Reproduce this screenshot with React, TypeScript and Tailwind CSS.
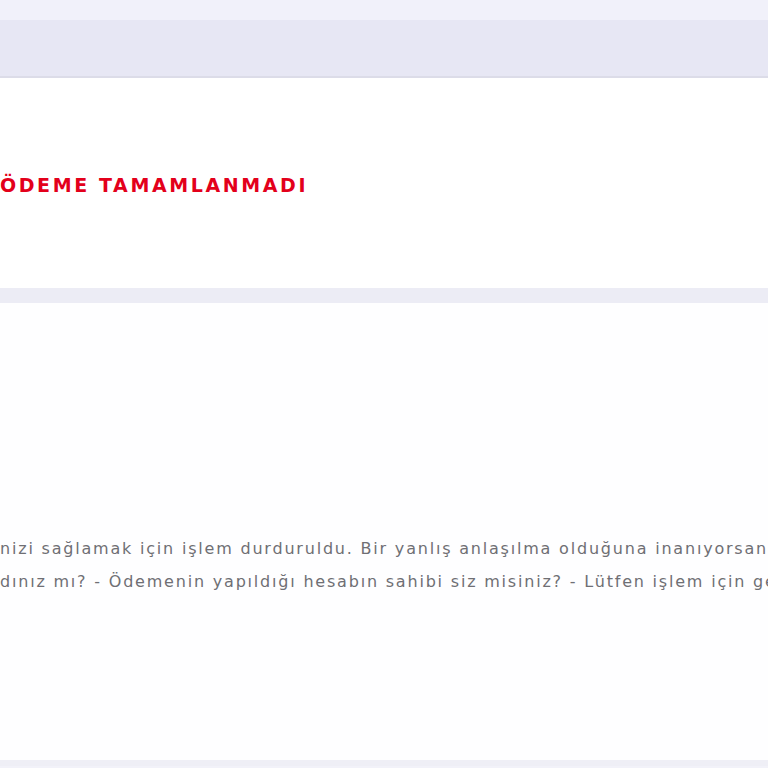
export default function App() {
  return (
    <div className="w-[768px] h-[768px] overflow-hidden bg-[#f2f2f9] flex flex-col" style={{ fontFamily: '"DejaVu Sans", "Noto Sans", sans-serif' }}>
      <div className="h-[20px] shrink-0 bg-[#f1f1fa]" />
      <div className="h-[58px] shrink-0 bg-[#e7e7f4] border-b-2 border-[#dcdce8]" />
      <section className="h-[210px] shrink-0 bg-white flex items-center">
        <h1 className="text-[19px] font-bold text-[#e3001b] tracking-[2.6px] whitespace-nowrap pt-[4px]">ÖDEME TAMAMLANMADI</h1>
      </section>
      <div className="h-[15px] shrink-0 bg-[#ececf5]" />
      <section className="h-[457px] shrink-0 bg-[#fefeff] pt-[229px]">
        <p className="text-[16px] leading-[33px] tracking-[1.8px] text-[#6f6f74] whitespace-nowrap">
          nizi sağlamak için işlem durduruldu. Bir yanlış anlaşılma olduğuna inanıyorsanız
          <br />
          dınız mı? - Ödemenin yapıldığı hesabın sahibi siz misiniz? - Lütfen işlem için gerekli
        </p>
      </section>
      <div className="h-[6px] shrink-0 bg-[#efeff6]" />
    </div>
  );
}
